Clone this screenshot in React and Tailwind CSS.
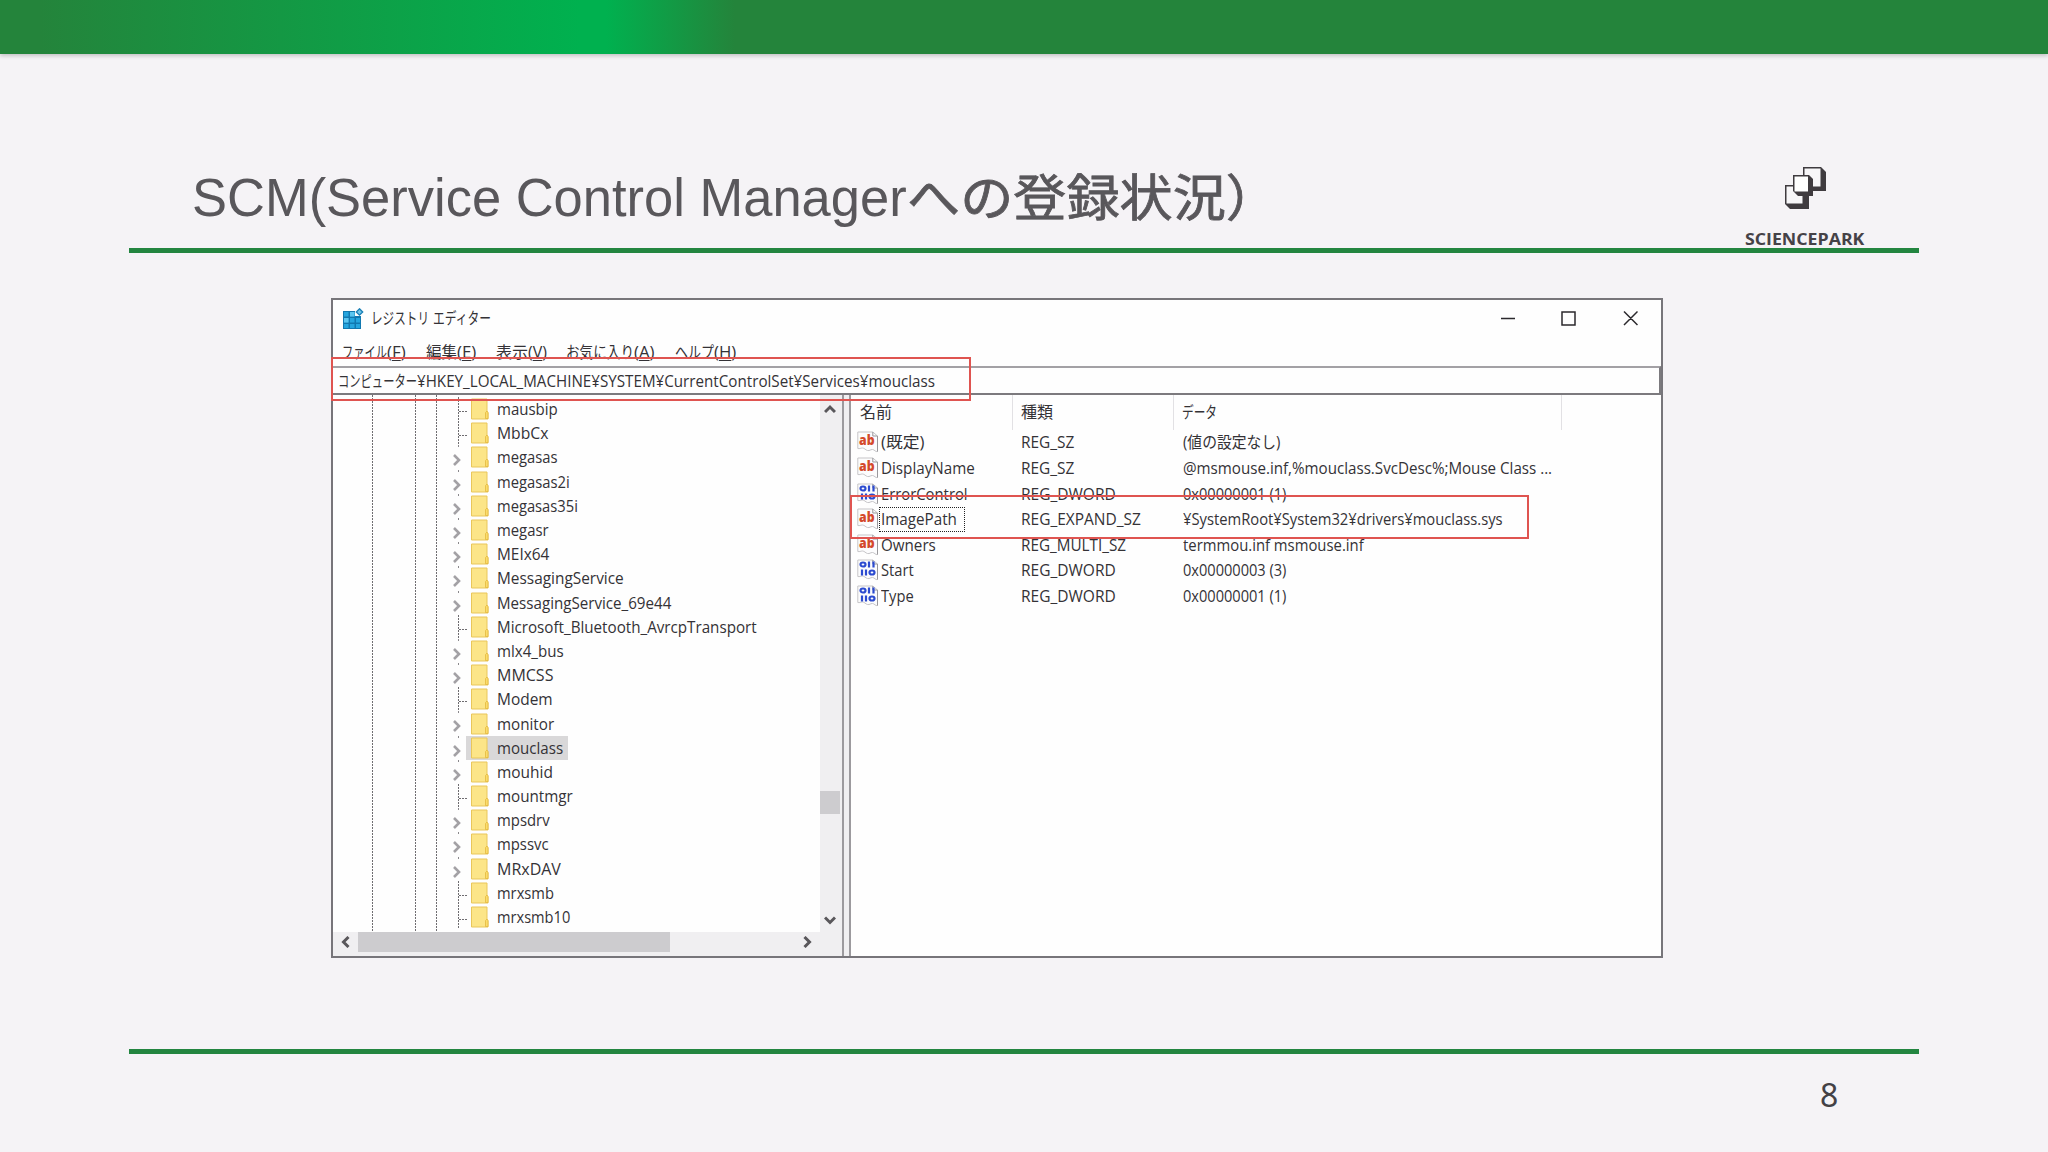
import { useLayoutEffect, useRef } from "react";

const TREE = [
  { name: "mausbip", w: 61 },
  { name: "MbbCx", w: 51 },
  { name: "megasas", w: 61, open: true },
  { name: "megasas2i", w: 73, open: true },
  { name: "megasas35i", w: 81, open: true },
  { name: "megasr", w: 52, open: true },
  { name: "MEIx64", w: 52, open: true },
  { name: "MessagingService", w: 127, open: true },
  { name: "MessagingService_69e44", w: 174, open: true },
  { name: "Microsoft_Bluetooth_AvrcpTransport", w: 260 },
  { name: "mlx4_bus", w: 67, open: true },
  { name: "MMCSS", w: 56, open: true },
  { name: "Modem", w: 56 },
  { name: "monitor", w: 57, open: true },
  { name: "mouclass", w: 66, open: true, selected: true },
  { name: "mouhid", w: 56, open: true },
  { name: "mountmgr", w: 76 },
  { name: "mpsdrv", w: 53, open: true },
  { name: "mpssvc", w: 52, open: true },
  { name: "MRxDAV", w: 64, open: true },
  { name: "mrxsmb", w: 57 },
  { name: "mrxsmb10", w: 73 },
];

const VALUES = [
  { name: "(既定)", nw: 43, type: "REG_SZ", tw: 53, data: "(値の設定なし)", dw: 97 },
  { name: "DisplayName", nw: 94, type: "REG_SZ", tw: 53, data: "@msmouse.inf,%mouclass.SvcDesc%;Mouse Class ...", dw: 369 },
  { name: "ErrorControl", nw: 87, type: "REG_DWORD", tw: 95, data: "0x00000001 (1)", dw: 103, binary: true },
  { name: "ImagePath", nw: 76, type: "REG_EXPAND_SZ", tw: 120, data: "¥SystemRoot¥System32¥drivers¥mouclass.sys", dw: 320, focused: true },
  { name: "Owners", nw: 55, type: "REG_MULTI_SZ", tw: 105, data: "termmou.inf msmouse.inf", dw: 181 },
  { name: "Start", nw: 33, type: "REG_DWORD", tw: 95, data: "0x00000003 (3)", dw: 103, binary: true },
  { name: "Type", nw: 33, type: "REG_DWORD", tw: 95, data: "0x00000001 (1)", dw: 103, binary: true },
];

const MENU = [
  { label: "ファイル", w: 45, key: "F", kw: 19, gap: "mr-[20px]" },
  { label: "編集", w: 31, key: "E", kw: 19, gap: "mr-[20px]" },
  { label: "表示", w: 32, key: "V", kw: 19, gap: "mr-[19px]" },
  { label: "お気に入り", w: 68, key: "A", kw: 21, gap: "mr-[20px]" },
  { label: "ヘルプ", w: 39, key: "H", kw: 22, gap: "" },
];

// Condenses or widens a label to a given width
const Fit = ({ w, children }) => {
  const ref = useRef(null);

  useLayoutEffect(() => {
    const el = ref.current;
    el.style.transform = `scaleX(${w / el.offsetWidth})`;
  }, [w]);

  return (
    <span className="inline-block shrink-0 whitespace-pre" style={{ width: w }}>
      <span ref={ref} className="inline-block origin-left">{children}</span>
    </span>
  );
};

const Logo = () => (
  <svg width="44" height="46" viewBox="0 0 44 46" className="block">
    <path d="M19 1h18l5 5v19H24l-5-5z" fill="#3f3b3f" />
    <path d="M20.500 2.500h16v18h-16z" fill="#f7f6f8" />
    <path d="M1 19h24v24H6l-5-5z" fill="#3f3b3f" />
    <path d="M2.500 20.500h16v17h-16z" fill="#f7f6f8" />
    <path d="M9 9h16l4 4v17H14l-5-5z" fill="#3f3b3f" />
    <path d="M10.500 10.500h13.500v15H10.500z" fill="#fff" />
  </svg>
);

const RegistryIcon = () => (
  <svg width="22" height="22" viewBox="0 0 22 22" className="block">
    <path d="M1 3h12v5h6v13H1z" fill="#1178b0" />
    <path d="M2 4h4.500v4.500H2zM8 4h4.500v4.500H8zM2 10h4.500v4.500H2zM8 10h4.500v4.500H8zM14 10h4v4.500h-4zM2 16h4.500v4H2zM8 16h4.500v4H8zM14 16h4v4h-4z" fill="#25a5de" />
    <path d="M8 4h4.500v4.500H8zM2 10h4.500v4.500H2z" fill="#5cc6f0" />
    <path d="M17.500.8l3.200 3.200-3.200 3.200L14.300 4z" fill="#6fc6ea" stroke="#1b7fb5" strokeWidth="1.300" />
  </svg>
);

const FolderIcon = () => (
  <svg width="18" height="22" viewBox="0 0 18 22" className="block">
    <path d="M.5 1h15.500v13.500h1v6.500H.5z" fill="#fce588" stroke="#e9c65a" />
    <path d="M14.500 20.500v-6l1.500-1.500 1 1.500v6z" fill="#fbdc6c" stroke="#e3b93f" strokeWidth=".8" />
  </svg>
);

const ValueIcon = ({ binary }) => (
  <svg width="22" height="22" viewBox="0 0 22 22" className="block">
    <path d="M.8 1h15l4.700 4v15.500c-2 .8-3-2-5-2-2.500 0-2.500 1.500-5 1-2-.4-3-2.500-5-2.500-2 0-2.700 1-4.700.5z" fill="#fcfcfd" stroke="#c6c5c8" />
    <path d="M15.800 1v4h4.700v15.500" fill="none" stroke="#98979b" />
    {binary ? (
      <g fill="none" stroke="#2c4bd0" strokeWidth="2.200">
        <ellipse cx="6" cy="5.500" rx="2.500" ry="2" />
        <path d="M12 2.500v6M16.500 2.500v6M5 10.500v6M9 10.500v6" />
        <ellipse cx="15" cy="13.500" rx="2.500" ry="2" />
      </g>
    ) : (
      <text x="2" y="14" fontFamily="Open Sans, sans-serif" fontSize="13.500" fontWeight="800" fill="#d4492c" textLength="15.500" lengthAdjust="spacingAndGlyphs">ab</text>
    )}
  </svg>
);

const Chevron = ({ d, color = "#59575b", width = 3 }) => (
  <svg width="12" height="12" viewBox="0 0 12 12" className="block">
    <path d={d} fill="none" stroke={color} strokeWidth={width} />
  </svg>
);

const TitleBar = () => (
  <div className="flex h-[44px] items-start">
    <div className="ml-[9px] mt-[8px]">
      <RegistryIcon />
    </div>
    <div className="ml-[7px] mt-[6px] flex leading-6">
      <Fit w={58}>レジストリ</Fit>
      <span className="w-[4px]" />
      <Fit w={58}>エディター</Fit>
    </div>
    <svg width="138" height="16" viewBox="0 0 138 16" className="ml-auto mr-[23px] mt-[10px] block" fill="none" stroke="#2b292d" strokeWidth="1.500">
      <path d="M1 8.500h14M62 2h13v13H62zM124 1.500l13.500 13.500M137.500 1.500L124 15" />
    </svg>
  </div>
);

const MenuBar = () => (
  <div className="flex h-[22px] pl-[9px] leading-[17px]">
    {MENU.map(({ label, w, key, kw, gap }) => (
      <div key={key} className={`flex ${gap}`}>
        <Fit w={w}>{label}</Fit>
        <Fit w={kw}>
          (<span className="underline underline-offset-2">{key}</span>)
        </Fit>
      </div>
    ))}
  </div>
);

const TreeRow = ({ name, w, open, selected }) => (
  <div className="flex h-[24.2px] shrink-0 items-center">
    <div className="relative ml-[119px] h-full w-[14px]">
      {open ? (
        <>
          <div className="absolute left-[6px] top-0 h-[2px] w-px bg-[#8a888c]" />
          <div className="absolute left-[-1px] top-[9px]">
            <Chevron d="M3 1l5 5-5 5" color="#a3a1a5" width={2.6} />
          </div>
        </>
      ) : (
        <>
          <div className="absolute left-[6px] top-0 h-full w-px bg-[repeating-linear-gradient(to_bottom,#6f6d71_0_2px,transparent_2px_3px)]" />
          <div className="absolute left-[7px] top-[14px] h-px w-[9px] bg-[repeating-linear-gradient(to_right,#6f6d71_0_2px,transparent_2px_3px)]" />
        </>
      )}
    </div>
    <div className={`flex h-full items-center pl-[5px] pr-[5px] ${selected ? "bg-[#d9d8d9]" : ""}`}>
      <FolderIcon />
      <div className="ml-[8px]">
        <Fit w={w}>{name}</Fit>
      </div>
    </div>
  </div>
);

const TreePane = () => (
  <div className="flex w-[511px] shrink-0 flex-col border-r-2 border-[#9c9a9e] bg-[#f0eff1]">
    <div className="flex h-[537px]">
      <div className="relative flex w-[487px] flex-col overflow-hidden bg-[#fefefe] pt-[2px]">
        <div className="absolute left-[39px] top-0 h-full w-px bg-[repeating-linear-gradient(to_bottom,#6f6d71_0_2px,transparent_2px_3px)]" />
        <div className="absolute left-[82px] top-0 h-full w-px bg-[repeating-linear-gradient(to_bottom,#6f6d71_0_2px,transparent_2px_3px)]" />
        <div className="absolute left-[103px] top-0 h-full w-px bg-[repeating-linear-gradient(to_bottom,#6f6d71_0_2px,transparent_2px_3px)]" />
        {TREE.map((row) => (
          <TreeRow key={row.name} {...row} />
        ))}
      </div>
      {/* Vertical scrollbar */}
      <div className="flex w-[20px] flex-col items-center">
        <div className="mt-[8px]">
          <Chevron d="M1 9l5-5 5 5" />
        </div>
        <div className="mt-[376px] h-[23px] w-full bg-[#cdcccf]" />
        <div className="mt-[100px]">
          <Chevron d="M1 3.500l5 5 5-5" />
        </div>
      </div>
    </div>
    {/* Horizontal scrollbar */}
    <div className="flex h-[20px] items-center">
      <div className="ml-[7px] w-[18px]">
        <Chevron d="M8.500 1l-5 5 5 5" />
      </div>
      <div className="h-full w-[312px] bg-[#cdcccf]" />
      <div className="ml-[131px]">
        <Chevron d="M3.500 1l5 5-5 5" />
      </div>
    </div>
  </div>
);

const ValuePane = () => (
  <div className="flex-1 border-l-2 border-[#9c9a9e] bg-[#fefefe]">
    <div className="flex h-[34.6px] leading-[35px]">
      <div className="w-[162px] border-r border-[#e2e1e4] pl-[9px]"><Fit w={32}>名前</Fit></div>
      <div className="w-[161px] border-r border-[#e2e1e4] pl-[8px]"><Fit w={32}>種類</Fit></div>
      <div className="w-[388px] border-r border-[#e2e1e4] pl-[8px]"><Fit w={35}>データ</Fit></div>
    </div>
    {VALUES.map((v) => (
      <div key={v.name} className="flex h-[25.6px] items-center">
        <div className="flex w-[170px] items-center pl-[6px]">
          <ValueIcon binary={v.binary} />
          <div className={`flex h-[25px] items-center ${v.focused ? "w-[86px] border border-dotted border-[#222] pl-px" : "pl-[2px]"}`}>
            <Fit w={v.nw}>{v.name}</Fit>
          </div>
        </div>
        <div className="w-[162px]"><Fit w={v.tw}>{v.type}</Fit></div>
        <Fit w={v.dw}>{v.data}</Fit>
      </div>
    ))}
  </div>
);

const RegistryWindow = () => (
  <div className="relative ml-[331px] mt-[45px] flex h-[660px] w-[1332px] flex-col border-2 border-[#77757a] bg-[#fefefe] font-['Open_Sans','Noto_Sans_CJK_JP',sans-serif] text-[16px] text-[#343236]">
    <TitleBar />
    <MenuBar />
    <div className="flex h-[29px] shrink-0 border-b-2 border-t-2 border-b-[#7c7a7e] border-r-2 border-r-[#7c7a7e] border-t-[#a3a1a5] pl-[5px] leading-[26px]">
      <Fit w={79}>コンピューター</Fit>
      <Fit w={518}>¥HKEY_LOCAL_MACHINE¥SYSTEM¥CurrentControlSet¥Services¥mouclass</Fit>
    </div>
    <div className="flex min-h-0 flex-1 gap-[5px] bg-[#f0eff1]">
      <TreePane />
      <ValuePane />
    </div>

    {/* Highlights */}
    <div className="absolute -left-[2px] top-[57px] h-[44px] w-[640px] border-2 border-[#df5450]" />
    <div className="absolute left-[517px] top-[195px] h-[44px] w-[679px] border-2 border-[#df5450]" />
  </div>
);

export default function App() {
  return (
    <div className="h-[1152px] w-[2048px] overflow-hidden bg-[#f5f3f6]">
      <div className="h-[54px] bg-[linear-gradient(to_right,#24843b_0,#24843b_40px,#00b14f_580px,#00b14f_606px,#24843b_735px)] shadow-[0_2px_4px_rgba(0,0,0,0.2)]" />

      <div className="ml-[129px] flex h-[199px] w-[1790px] items-end border-b-[5px] border-[#238540]">
        <h1 className="mb-[17px] ml-[63px] flex font-['Liberation_Sans','Noto_Sans_CJK_JP',sans-serif] text-[53px] leading-[66px] text-[#59575b]">
          <Fit w={715}>SCM(Service Control Manager</Fit>
          <span className="mt-[2px] text-[50px] leading-[64px] [-webkit-text-stroke:0.8px_#59575b]">
            <Fit w={372}>への登録状況）</Fit>
          </span>
        </h1>
        <div className="ml-auto mr-[55px] flex w-[120px] flex-col items-center">
          <div className="ml-[3px]">
            <Logo />
          </div>
          <div className="mt-[19px] font-['Open_Sans',sans-serif] text-[15.5px] font-bold leading-[17px] text-[#454247]">
            <Fit w={119}>SCIENCEPARK</Fit>
          </div>
        </div>
      </div>

      <RegistryWindow />

      <div className="ml-[129px] mt-[91px] h-[5px] w-[1790px] bg-[#238540]" />
      <div className="ml-[1820px] mt-[21px] font-['Noto_Sans',sans-serif] text-[32px] leading-[40px] text-[#434145]">8</div>
    </div>
  );
}
